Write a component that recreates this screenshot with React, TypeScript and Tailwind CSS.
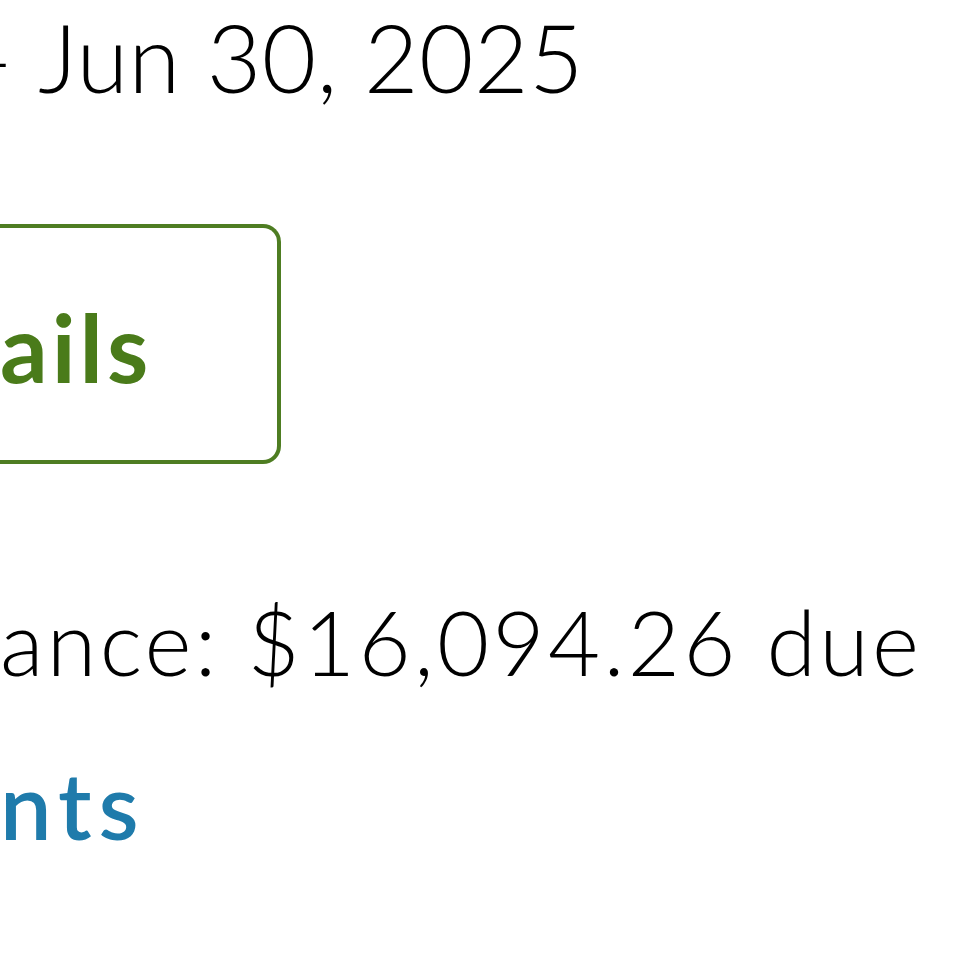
import React from "react";

export default function App() {
  return (
    <div
      className="w-[960px] h-[960px] overflow-hidden bg-white text-black flex flex-col"
      style={{ fontFamily: "Lato, 'Noto Sans', sans-serif" }}
    >
      {/* Billing period */}
      <div className="flex -ml-[40px] h-[120px] -mt-[3px]">
        <span className="whitespace-nowrap text-[94px] leading-[120px] font-light tracking-[0.5px]">
          – Jun 30, 2025
        </span>
      </div>

      {/* Details button */}
      <div className="flex mt-[107px]">
        <button className="shrink-0 w-[281px] h-[240px] border-[4px] border-l-0 border-[#4e7d22] rounded-r-[18px] flex items-center pt-[6px] bg-white">
          <span className="whitespace-nowrap text-[94px] font-bold text-[#4a7b1a] leading-none tracking-[4px]">
            ails
          </span>
        </button>
      </div>

      {/* Balance */}
      <div className="flex mt-[117px]">
        <span className="whitespace-nowrap text-[90px] leading-[120px] font-light tracking-[3.3px]">
          ance: $16,094.26 due
        </span>
      </div>

      {/* Payments link */}
      <div className="flex mt-[44px]">
        <span className="whitespace-nowrap text-[92px] leading-[120px] font-semibold text-[#1f7bab] tracking-[7px]">
          nts
        </span>
      </div>
    </div>
  );
}
